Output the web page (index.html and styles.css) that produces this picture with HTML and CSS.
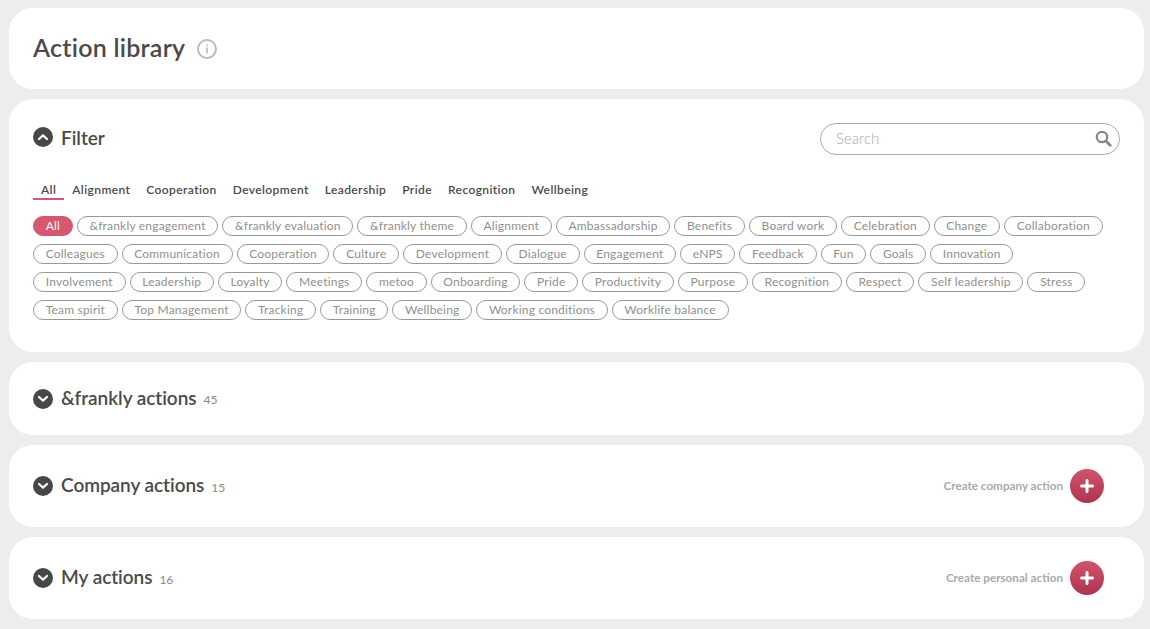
FILE: index.html
```html
<!DOCTYPE html>
<html lang="en">
<head>
<meta charset="utf-8">
<title>Action library</title>
<link rel="stylesheet" href="styles.css">
</head>
<body>
<main class="page">
  <section class="card card-title">
    <h1 class="page-title">Action library</h1>
    <svg class="info" width="20" height="20" viewBox="0 0 20 20"><circle cx="10" cy="10" r="9" fill="none" stroke="#bbb" stroke-width="2"/><rect x="9.2" y="8.5" width="1.6" height="6" fill="#bbb"/><rect x="9.2" y="5.5" width="1.6" height="1.7" fill="#bbb"/></svg>
  </section>
  <section class="card card-filter">
    <div class="filter-head">
      <span class="toggle toggle-filter"><svg width="12" height="8" viewBox="0 0 12 8"><path d="M2 6l4-3.6L10 6" fill="none" stroke="#fff" stroke-width="2.2" stroke-linecap="round" stroke-linejoin="round"/></svg></span>
      <h2 class="section-title">Filter</h2>
      <div class="search">
        <span class="search-text">Search</span>
        <svg width="17" height="17" viewBox="0 0 17 17"><circle cx="7" cy="7" r="5.2" fill="none" stroke="#888" stroke-width="2.2"/><path d="M11 11l4.2 4.2" stroke="#888" stroke-width="2.8" stroke-linecap="round"/></svg>
      </div>
    </div>
    <nav class="tabs">
      <span class="tab tab-active">All</span>
      <span class="tab">Alignment</span>
      <span class="tab">Cooperation</span>
      <span class="tab">Development</span>
      <span class="tab">Leadership</span>
      <span class="tab">Pride</span>
      <span class="tab">Recognition</span>
      <span class="tab">Wellbeing</span>
    </nav>
    <div class="chips">
      <span class="chip chip-active">All</span>
      <span class="chip">&amp;frankly engagement</span>
      <span class="chip">&amp;frankly evaluation</span>
      <span class="chip">&amp;frankly theme</span>
      <span class="chip">Alignment</span>
      <span class="chip">Ambassadorship</span>
      <span class="chip">Benefits</span>
      <span class="chip">Board work</span>
      <span class="chip">Celebration</span>
      <span class="chip">Change</span>
      <span class="chip">Collaboration</span>
      <span class="chip">Colleagues</span>
      <span class="chip">Communication</span>
      <span class="chip">Cooperation</span>
      <span class="chip">Culture</span>
      <span class="chip">Development</span>
      <span class="chip">Dialogue</span>
      <span class="chip">Engagement</span>
      <span class="chip">eNPS</span>
      <span class="chip">Feedback</span>
      <span class="chip">Fun</span>
      <span class="chip">Goals</span>
      <span class="chip">Innovation</span>
      <span class="chip">Involvement</span>
      <span class="chip">Leadership</span>
      <span class="chip">Loyalty</span>
      <span class="chip">Meetings</span>
      <span class="chip">metoo</span>
      <span class="chip">Onboarding</span>
      <span class="chip">Pride</span>
      <span class="chip">Productivity</span>
      <span class="chip">Purpose</span>
      <span class="chip">Recognition</span>
      <span class="chip">Respect</span>
      <span class="chip">Self leadership</span>
      <span class="chip">Stress</span>
      <span class="chip">Team spirit</span>
      <span class="chip">Top Management</span>
      <span class="chip">Tracking</span>
      <span class="chip">Training</span>
      <span class="chip">Wellbeing</span>
      <span class="chip">Working conditions</span>
      <span class="chip">Worklife balance</span>
    </div>
  </section>
  <section class="card card-frankly">
    <span class="toggle"><svg width="12" height="8" viewBox="0 0 12 8"><path d="M2 2l4 3.6L10 2" fill="none" stroke="#fff" stroke-width="2.2" stroke-linecap="round" stroke-linejoin="round"/></svg></span>
    <h2 class="section-title">&amp;frankly actions</h2>
    <span class="count">45</span>
  </section>
  <section class="card card-action">
    <span class="toggle"><svg width="12" height="8" viewBox="0 0 12 8"><path d="M2 2l4 3.6L10 2" fill="none" stroke="#fff" stroke-width="2.2" stroke-linecap="round" stroke-linejoin="round"/></svg></span>
    <h2 class="section-title">Company actions</h2>
    <span class="count">15</span>
    <div class="create">
      <span class="create-label">Create company action</span>
      <span class="plus"><svg width="14" height="14" viewBox="0 0 14 14"><path d="M7 1.5v11M1.5 7h11" stroke="#fff" stroke-width="3" stroke-linecap="round"/></svg></span>
    </div>
  </section>
  <section class="card card-action">
    <span class="toggle"><svg width="12" height="8" viewBox="0 0 12 8"><path d="M2 2l4 3.6L10 2" fill="none" stroke="#fff" stroke-width="2.2" stroke-linecap="round" stroke-linejoin="round"/></svg></span>
    <h2 class="section-title">My actions</h2>
    <span class="count">16</span>
    <div class="create">
      <span class="create-label">Create personal action</span>
      <span class="plus"><svg width="14" height="14" viewBox="0 0 14 14"><path d="M7 1.5v11M1.5 7h11" stroke="#fff" stroke-width="3" stroke-linecap="round"/></svg></span>
    </div>
  </section>
</main>
</body>
</html>
```
FILE: styles.css
```css
* { box-sizing: border-box; }
html, body { margin: 0; height: 100%; }
body {
  background: #ededed;
  font-family: "Lato", "Open Sans", sans-serif;
  color: #4a4a4a;
  overflow: hidden;
}
.page {
  display: flex;
  flex-direction: column;
  gap: 10px;
  padding: 8px 6px 0 9px;
}
.card {
  background: #fff;
  border-radius: 24px;
  padding: 0 24px;
  display: flex;
  align-items: center;
}
.card-title { height: 81px; gap: 12px; }
.page-title { margin: 0 0 3px; font-size: 25px; font-weight: 600; letter-spacing: 0.25px; color: #4a4a4a; }
.card-filter { height: 253px; display: block; padding-top: 24px; }
.filter-head { display: flex; align-items: center; height: 32px; }
.toggle {
  width: 20px; height: 20px; border-radius: 50%;
  background: #474747;
  display: flex; align-items: center; justify-content: center;
  flex: none;
}
.toggle-filter { margin-bottom: 4px; }
.section-title { margin: 0 0 3px 8px; font-size: 19px; font-weight: 600; letter-spacing: -0.05px; color: #4a4a4a; }
.count { margin-left: 7px; font-size: 12px; color: #888; position: relative; top: 1px; }
.search {
  margin-left: auto;
  width: 300px; height: 32px;
  border: 1px solid #aaa;
  border-radius: 16px;
  display: flex; align-items: center; justify-content: space-between;
  padding: 0 7px 2px 15px;
}
.search-text { font-size: 15px; font-weight: 300; color: #aaa; }
.tabs { display: flex; gap: 16px; margin-top: 25px; }
.tab { font-size: 12px; font-weight: 600; letter-spacing: 0.4px; color: #4a4a4a; height: 20px; line-height: 19px; }
.tab-active { padding: 0 8px; border-bottom: 2px solid #d6566f; margin-right: -8px; }
.chips { display: flex; flex-wrap: wrap; gap: 8px 4px; margin-top: 16px; width: 1075px; }
.chip {
  height: 20px;
  border: 1px solid #999;
  border-radius: 10px;
  padding: 0 11.7px;
  font-size: 12px; line-height: 18px; letter-spacing: 0.2px;
  color: #909090;
  white-space: nowrap;
}
.chip-active { background: #d9566f; border-color: #d9566f; color: #fff; }
.card-frankly { height: 73px; }
.card-action { height: 82px; }
.create { margin-left: auto; display: flex; align-items: center; gap: 7px; padding-right: 16px; }
.create-label { font-size: 11.7px; font-weight: 700; color: #aaa; margin-bottom: 3px; }
.plus {
  width: 34px; height: 34px; border-radius: 50%;
  background: linear-gradient(#d2536c, #ae3350);
  display: flex; align-items: center; justify-content: center;
}
```
